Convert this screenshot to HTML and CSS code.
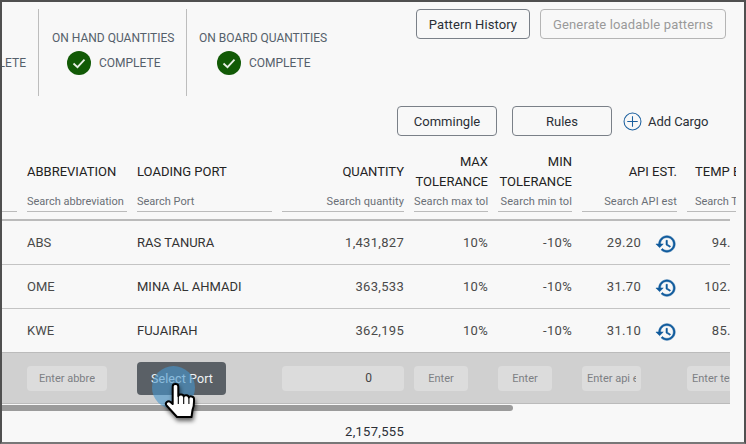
FILE: index.html
```html
<!DOCTYPE html>
<html lang="en">

<head>
    <meta charset="UTF-8">
    <title>Cargo nomination</title>
    <link rel="stylesheet" href="styles.css">
</head>

<body>
    <div class="window">
        <header class="topBar">
            <div class="statusList">
                <div class="statusItem statusClipped"><span>COMPLETE</span></div>
                <div class="statusItem statusHand">
                    <div class="statusTitle">ON HAND QUANTITIES</div>
                    <div class="statusValue">
                        <svg class="checkIcon" viewBox="0 0 24 24"><circle cx="12" cy="12" r="12" fill="#125a06" /><path d="M6.5 12.5l4 3.7 7-7.6" fill="none" stroke="#e8efe6" stroke-width="1.8" /></svg>
                        <span>COMPLETE</span>
                    </div>
                </div>
                <div class="statusItem statusBoard">
                    <div class="statusTitle">ON BOARD QUANTITIES</div>
                    <div class="statusValue">
                        <svg class="checkIcon" viewBox="0 0 24 24"><circle cx="12" cy="12" r="12" fill="#125a06" /><path d="M6.5 12.5l4 3.7 7-7.6" fill="none" stroke="#e8efe6" stroke-width="1.8" /></svg>
                        <span>COMPLETE</span>
                    </div>
                </div>
            </div>
            <div class="topActions">
                <button type="button" class="btn btnHistory">Pattern History</button>
                <button type="button" class="btn btnDisabled">Generate loadable patterns</button>
            </div>
        </header>

        <div class="cargoActions">
            <button type="button" class="btn btnWide">Commingle</button>
            <button type="button" class="btn btnWide">Rules</button>
            <div class="addCargo">
                <svg class="plusIcon" viewBox="0 0 20 20"><circle cx="10" cy="10" r="8.9" fill="none" stroke="#1a5f9e" stroke-width="1.1" /><path d="M10 4.5v11M4.5 10h11" fill="none" stroke="#1a5f9e" stroke-width="1.1" /></svg>
                <span>Add Cargo</span>
            </div>
        </div>

        <div class="tableWrap">
            <div class="gridRow headRow">
                <div class="headCell"><div class="headTitle"></div><div class="headSearch"></div></div>
                <div class="headCell"><div class="headTitle">ABBREVIATION</div><div class="headSearch">Search abbreviation</div></div>
                <div class="headCell"><div class="headTitle">LOADING PORT</div><div class="headSearch">Search Port</div></div>
                <div class="headCell alignRight"><div class="headTitle">QUANTITY</div><div class="headSearch">Search quantity</div></div>
                <div class="headCell alignRight"><div class="headTitle">MAX<br>TOLERANCE</div><div class="headSearch">Search max tol</div></div>
                <div class="headCell alignRight"><div class="headTitle">MIN<br>TOLERANCE</div><div class="headSearch">Search min tol</div></div>
                <div class="headCell alignRight"><div class="headTitle">API EST.</div><div class="headSearch">Search API est</div></div>
                <div class="headCell headTemp"><div class="headTitle">TEMP EST.</div><div class="headSearch">Search Temp</div></div>
            </div>

            <div class="tableBody">
                <div class="gridRow dataRow">
                    <div></div>
                    <div>ABS</div>
                    <div class="portName">RAS TANURA</div>
                    <div class="alignRight numCell">1,431,827</div>
                    <div class="alignRight numCell">10%</div>
                    <div class="alignRight numCell">-10%</div>
                    <div class="apiCell numCell"><span>29.20</span><svg class="historyIcon" viewBox="0 0 24 24"><path d="M13 3c-4.97 0-9 4.03-9 9H1l3.89 3.89.07.14L9 12H6c0-3.87 3.13-7 7-7s7 3.13 7 7-3.13 7-7 7c-1.93 0-3.68-.79-4.94-2.06l-1.42 1.42C8.27 19.99 10.51 21 13 21c4.97 0 9-4.03 9-9s-4.03-9-9-9zm-1 5v5l4.28 2.54.72-1.21-3.5-2.08V8H12z" /></svg></div>
                    <div class="tempCell numCell">94.50</div>
                </div>
                <div class="gridRow dataRow">
                    <div></div>
                    <div>OME</div>
                    <div class="portName">MINA AL AHMADI</div>
                    <div class="alignRight numCell">363,533</div>
                    <div class="alignRight numCell">10%</div>
                    <div class="alignRight numCell">-10%</div>
                    <div class="apiCell numCell"><span>31.70</span><svg class="historyIcon" viewBox="0 0 24 24"><path d="M13 3c-4.97 0-9 4.03-9 9H1l3.89 3.89.07.14L9 12H6c0-3.87 3.13-7 7-7s7 3.13 7 7-3.13 7-7 7c-1.93 0-3.68-.79-4.94-2.06l-1.42 1.42C8.27 19.99 10.51 21 13 21c4.97 0 9-4.03 9-9s-4.03-9-9-9zm-1 5v5l4.28 2.54.72-1.21-3.5-2.08V8H12z" /></svg></div>
                    <div class="tempCell numCell">102.50</div>
                </div>
                <div class="gridRow dataRow">
                    <div></div>
                    <div>KWE</div>
                    <div class="portName">FUJAIRAH</div>
                    <div class="alignRight numCell">362,195</div>
                    <div class="alignRight numCell">10%</div>
                    <div class="alignRight numCell">-10%</div>
                    <div class="apiCell numCell"><span>31.10</span><svg class="historyIcon" viewBox="0 0 24 24"><path d="M13 3c-4.97 0-9 4.03-9 9H1l3.89 3.89.07.14L9 12H6c0-3.87 3.13-7 7-7s7 3.13 7 7-3.13 7-7 7c-1.93 0-3.68-.79-4.94-2.06l-1.42 1.42C8.27 19.99 10.51 21 13 21c4.97 0 9-4.03 9-9s-4.03-9-9-9zm-1 5v5l4.28 2.54.72-1.21-3.5-2.08V8H12z" /></svg></div>
                    <div class="tempCell numCell">85.50</div>
                </div>
                <div class="gridRow addRow">
                    <div></div>
                    <div><div class="fakeInput inputAbbr"><span>Enter abbre</span></div></div>
                    <div><button type="button" class="selectPort">Select Port</button></div>
                    <div><div class="fakeInput inputQty">0</div></div>
                    <div><div class="fakeInput inputTol"><span>Enter</span></div></div>
                    <div><div class="fakeInput inputTol"><span>Enter</span></div></div>
                    <div><div class="fakeInput inputApi"><span>Enter api est</span></div></div>
                    <div><div class="fakeInput inputTemp"><span>Enter temp</span></div></div>
                </div>
            </div>
        </div>

        <div class="scrollBar"><div class="scrollThumb"></div></div>

        <div class="gridRow totalRow">
            <div></div>
            <div></div>
            <div></div>
            <div class="alignRight numCell">2,157,555</div>
        </div>

        <!-- click marker and mouse pointer lie over the table and the scrollbar -->
        <span class="clickRipple"></span>
        <svg class="handCursor" viewBox="0 0 36 40">
            <path d="M9.700 5.500c0-3.200 5.600-3.200 5.600 0V15c.3-2.200 5.200-2.200 5.400.5.4-2 5-1.800 5.200.9.600-1.700 5-1.200 5.100 1.400.2 4.500 0 8-1.500 11.200L28.500 36H14L3.500 24.500c-2-2.500 1.500-5.500 4-3.500l2.200 2z" fill="#fff" stroke="#000" stroke-width="2" stroke-linejoin="round" />
            <path d="M15.300 15v8M20.700 16v7M25.900 17v6" fill="none" stroke="#000" stroke-width="1.100" />
        </svg>
    </div>
</body>

</html>
```

FILE: styles.css
```css
* {
    box-sizing: border-box;
}

html,
body {
    margin: 0;
    padding: 0;
}

body {
    font-family: Roboto, 'Noto Sans', sans-serif;
    font-size: 12px;
    color: #4a4a4a;
}

.window {
    position: relative;
    width: 746px;
    height: 444px;
    background: #f8f8f8;
    border: 2px solid #505050;
    border-bottom-color: #777777;
    overflow: hidden;
}

.topBar {
    display: flex;
    justify-content: space-between;
    padding: 7px 18px 0 0;
    height: 104px;
}

.statusList {
    display: flex;
    height: 87px;
}

.statusItem {
    border-right: 1px solid #bdbdbd;
    text-align: center;
}

.statusClipped {
    width: 37px;
    padding-top: 47px;
    overflow: hidden;
    display: flex;
    justify-content: flex-end;
    padding-right: 12px;
    color: #55606b;
}

.statusHand {
    width: 148px;
    padding: 22px 0 0 13px;
}

.statusBoard {
    border-right: 0;
    padding: 22px 0 0 12px;
}

.statusTitle {
    color: #55606b;
    white-space: nowrap;
    text-align: left;
    line-height: 14px;
}

.statusValue {
    display: flex;
    align-items: center;
    gap: 8px;
    margin: 6px 0 0 15px;
    color: #55606b;
}

.statusBoard .statusValue {
    margin-left: 18px;
}

.checkIcon {
    width: 24px;
    height: 24px;
}

.topActions {
    display: flex;
    gap: 10px;
    align-items: flex-start;
}

.btn {
    height: 30px;
    font-family: inherit;
    font-size: 13px;
    color: #2a2f36;
    background: transparent;
    border: 1px solid #7a8088;
    border-radius: 4px;
    padding: 1px 0 0;
}

.btnHistory {
    width: 114px;
    letter-spacing: 0.1px;
}

.btnDisabled {
    width: 186px;
    color: #9a9a9a;
    border-color: #b5b5b5;
    letter-spacing: 0.15px;
}

.cargoActions {
    display: flex;
    align-items: center;
    padding-left: 395px;
    height: 30px;
}

.btnWide {
    width: 100px;
    margin-right: 15px;
}

.btnWide:nth-child(2) {
    margin-right: 11px;
}

.addCargo {
    display: flex;
    align-items: center;
    gap: 6px;
    font-size: 13px;
    color: #2a2f36;
}

.addCargo span {
    letter-spacing: -0.05px;
    padding-top: 1px;
}

.plusIcon {
    width: 19px;
    height: 19px;
}

.tableWrap {
    width: 734px;
    margin-top: 15px;
    overflow: hidden;
}

.gridRow {
    display: grid;
    grid-template-columns: 15px 100px 135px 122px 74px 74px 95px 90px;
    column-gap: 10px;
}

.headRow {
    height: 68px;
    padding-bottom: 7px;
    white-space: nowrap;
}

.headTitle {
    height: 41px;
    display: flex;
    align-items: center;
    font-size: 13px;
    line-height: 20px;
    color: #222222;
}

.headSearch {
    height: 20px;
    font-size: 11px;
    line-height: 19px;
    color: #6a6f76;
    border-bottom: 1px solid #bbbbbb;
}

.headTemp .headTitle,
.headTemp .headSearch {
    padding-left: 8px;
}

.alignRight {
    text-align: right;
}

.alignRight .headTitle {
    justify-content: flex-end;
}

.alignRight .headSearch {
    letter-spacing: 0.1px;
}

.tableBody {
    width: 728px;
    overflow: hidden;
    border-top: 2px solid #bbbbbb;
}

.dataRow {
    height: 44px;
    align-items: center;
    font-size: 13px;
    border-bottom: 1px solid #c4c4c4;
    white-space: nowrap;
}

.numCell {
    font-size: 13px;
    letter-spacing: 0.3px;
}

.portName {
    color: #333333;
}

.apiCell {
    display: flex;
    align-items: center;
    justify-content: flex-end;
    gap: 14px;
}

.historyIcon {
    width: 22px;
    height: 22px;
    fill: #0f5a9c;
    stroke: #0f5a9c;
    stroke-width: 0.6;
    margin-top: 2px;
}

.tempCell {
    text-align: right;
    padding-right: 31px;
}

.addRow {
    height: 52px;
    align-items: center;
    background: #d0d0d0;
    border-bottom: 1px solid #bbbbbb;
    margin-top: -1px;
    border-top: 1px solid #bbbbbb;
}

.fakeInput {
    height: 25px;
    line-height: 25px;
    padding: 0 10px;
    font-size: 11px;
    color: #7c7f84;
    background: #dcdcdc;
    border-radius: 4px;
    overflow: hidden;
    white-space: nowrap;
}

.fakeInput span {
    display: block;
    overflow: hidden;
}

.inputAbbr {
    width: 80px;
}

.inputAbbr span {
    width: 56px;
    margin-left: 2px;
}

.inputQty {
    text-align: right;
    padding-right: 32px;
    color: #444444;
    font-size: 12px;
}

.inputTol {
    width: 54px;
    text-align: center;
    padding: 0;
}

.inputApi {
    width: 59px;
    padding: 0 5px;
}

.inputTemp {
    padding: 0 5px;
}

.selectPort {
    display: block;
    width: 89px;
    height: 33px;
    font-family: inherit;
    font-size: 12.5px;
    letter-spacing: 0.1px;
    color: #f0f3f5;
    background: #5a6066;
    border: 0;
    border-radius: 4px;
    padding: 0 0 0 1px;
}

.clickRipple {
    position: absolute;
    left: 150px;
    top: 364px;
    width: 43px;
    height: 43px;
    border-radius: 50%;
    background: rgba(70, 150, 205, 0.6);
}

.handCursor {
    position: absolute;
    left: 161px;
    top: 379px;
    width: 36px;
    height: 40px;
    filter: drop-shadow(1px 3px 2px rgba(0, 0, 0, 0.6));
}

.scrollBar {
    height: 6px;
    margin-top: 1px;
}

.scrollThumb {
    width: 511px;
    height: 6px;
    background: #9b9b9b;
    border-radius: 0 3px 3px 0;
}

.totalRow {
    margin-top: 14px;
    color: #2a2f36;
    line-height: 14px;
}
```
